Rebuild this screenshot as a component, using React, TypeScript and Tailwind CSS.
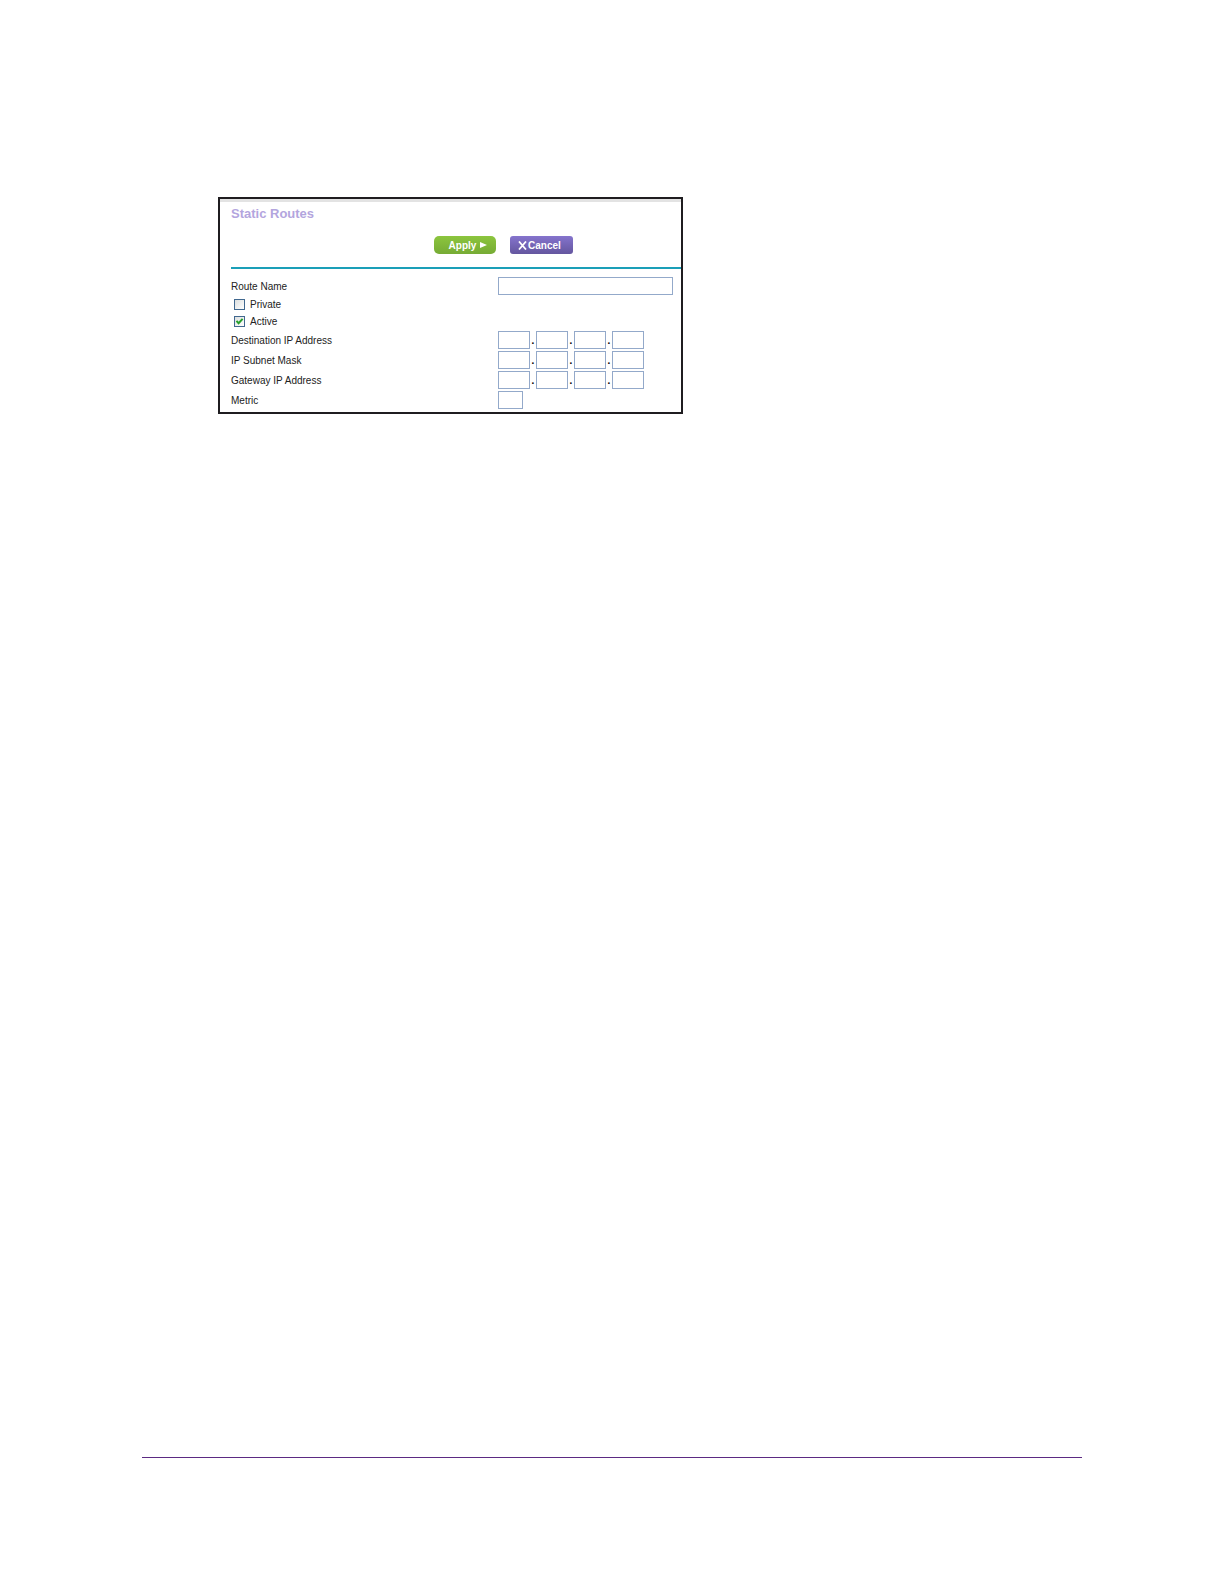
import { Fragment, useState } from "react";

const addressRows = [
  { id: "destination", label: "Destination IP Address" },
  { id: "subnet", label: "IP Subnet Mask" },
  { id: "gateway", label: "Gateway IP Address" },
];

const field = "block h-[18px] border border-[#93a9ca] bg-white px-1 text-[10px] outline-none";
const row = "grid h-5 grid-cols-[267px_minmax(0,1fr)] items-center";

function CheckRow({ id, label, initial }: { id: string; label: string; initial: boolean }) {
  const [checked, setChecked] = useState(initial);
  return (
    <div className="flex h-[17px] items-center gap-[5px] pl-[3px]">
      <span className="relative flex size-[11px]">
        <input
          id={id}
          type="checkbox"
          checked={checked}
          onChange={(e) => setChecked(e.target.checked)}
          className="size-[11px] appearance-none border border-[#41688f] bg-linear-to-br from-[#dcdfdf] to-white"
        />
        {checked && (
          <svg viewBox="0 0 11 11" className="pointer-events-none absolute inset-0 size-[11px]" aria-hidden="true">
            <path d="M2.5 4.8 4.6 7.2 8.6 2.9" fill="none" stroke="#27a02b" strokeWidth="2" />
          </svg>
        )}
      </span>
      <label htmlFor={id}>{label}</label>
    </div>
  );
}

export default function App() {
  return (
    <div className="flex min-h-screen flex-col bg-white px-[142px] pt-[197px] pb-[126px] font-['Liberation_Sans',Arial,sans-serif] text-[10px] text-[#222]">
      <main className="flex-1 pl-[76px]">
        <form
          onSubmit={(e) => e.preventDefault()}
          className="w-full max-w-[465px] border-2 border-[#1f1d20] bg-white pb-[2px]"
        >
          <div className="h-[3px] bg-[#e3e3e3]" />
          <div className="pl-[11px]">
            <h1 className="pt-1 text-[13px] leading-4 font-bold text-[#b3a5de]">Static Routes</h1>
            <div className="mt-[14px] mb-[13px] flex justify-center gap-[14px] pr-[108px] pl-[203px]">
              <button
                type="submit"
                className="flex h-[18px] w-[62px] shrink-0 items-center justify-center gap-1 rounded-[5px] bg-linear-to-b from-[#8cc53e] to-[#76ab35] pl-[6px] font-bold text-white"
              >
                Apply
                <svg viewBox="0 0 7 6" className="h-[6px] w-[7px]" aria-hidden="true">
                  <path d="M0 0 7 3 0 6Z" fill="currentColor" />
                </svg>
              </button>
              <button
                type="button"
                className="flex h-[18px] w-[63px] shrink-0 items-center gap-px rounded-[3px] bg-linear-to-b from-[#8574cd] to-[#64569f] pl-2 font-bold text-white"
              >
                <svg viewBox="0 0 9 9" className="size-[9px]" aria-hidden="true">
                  <path d="M1 .5 8 8.5M8 .5 1 8.5" stroke="currentColor" strokeWidth="1.8" />
                </svg>
                Cancel
              </button>
            </div>
            <hr className="mb-[7px] border-t-2 border-[#1a9fb8]" />
            <div className={row}>
              <label htmlFor="route-name">Route Name</label>
              <div className="pr-2">
                <input id="route-name" type="text" className={`${field} w-full`} />
              </div>
            </div>
            <CheckRow id="private" label="Private" initial={false} />
            <CheckRow id="active" label="Active" initial={true} />
            {addressRows.map(({ id, label }) => (
              <div key={id} className={row}>
                <label htmlFor={`${id}-1`}>{label}</label>
                <div className="flex">
                  {[1, 2, 3, 4].map((part) => (
                    <Fragment key={part}>
                      {part > 1 && (
                        <span className="w-[6px] pt-1 text-center leading-3 font-bold text-black">.</span>
                      )}
                      <input
                        id={`${id}-${part}`}
                        type="text"
                        maxLength={3}
                        aria-label={part > 1 ? `${label} part ${part}` : undefined}
                        className={`${field} w-8`}
                      />
                    </Fragment>
                  ))}
                </div>
              </div>
            ))}
            <div className={row}>
              <label htmlFor="metric">Metric</label>
              <input id="metric" type="text" maxLength={2} className={`${field} w-[25px]`} />
            </div>
          </div>
        </form>
      </main>
      <footer className="border-t border-[#5b2a82]" />
    </div>
  );
}
